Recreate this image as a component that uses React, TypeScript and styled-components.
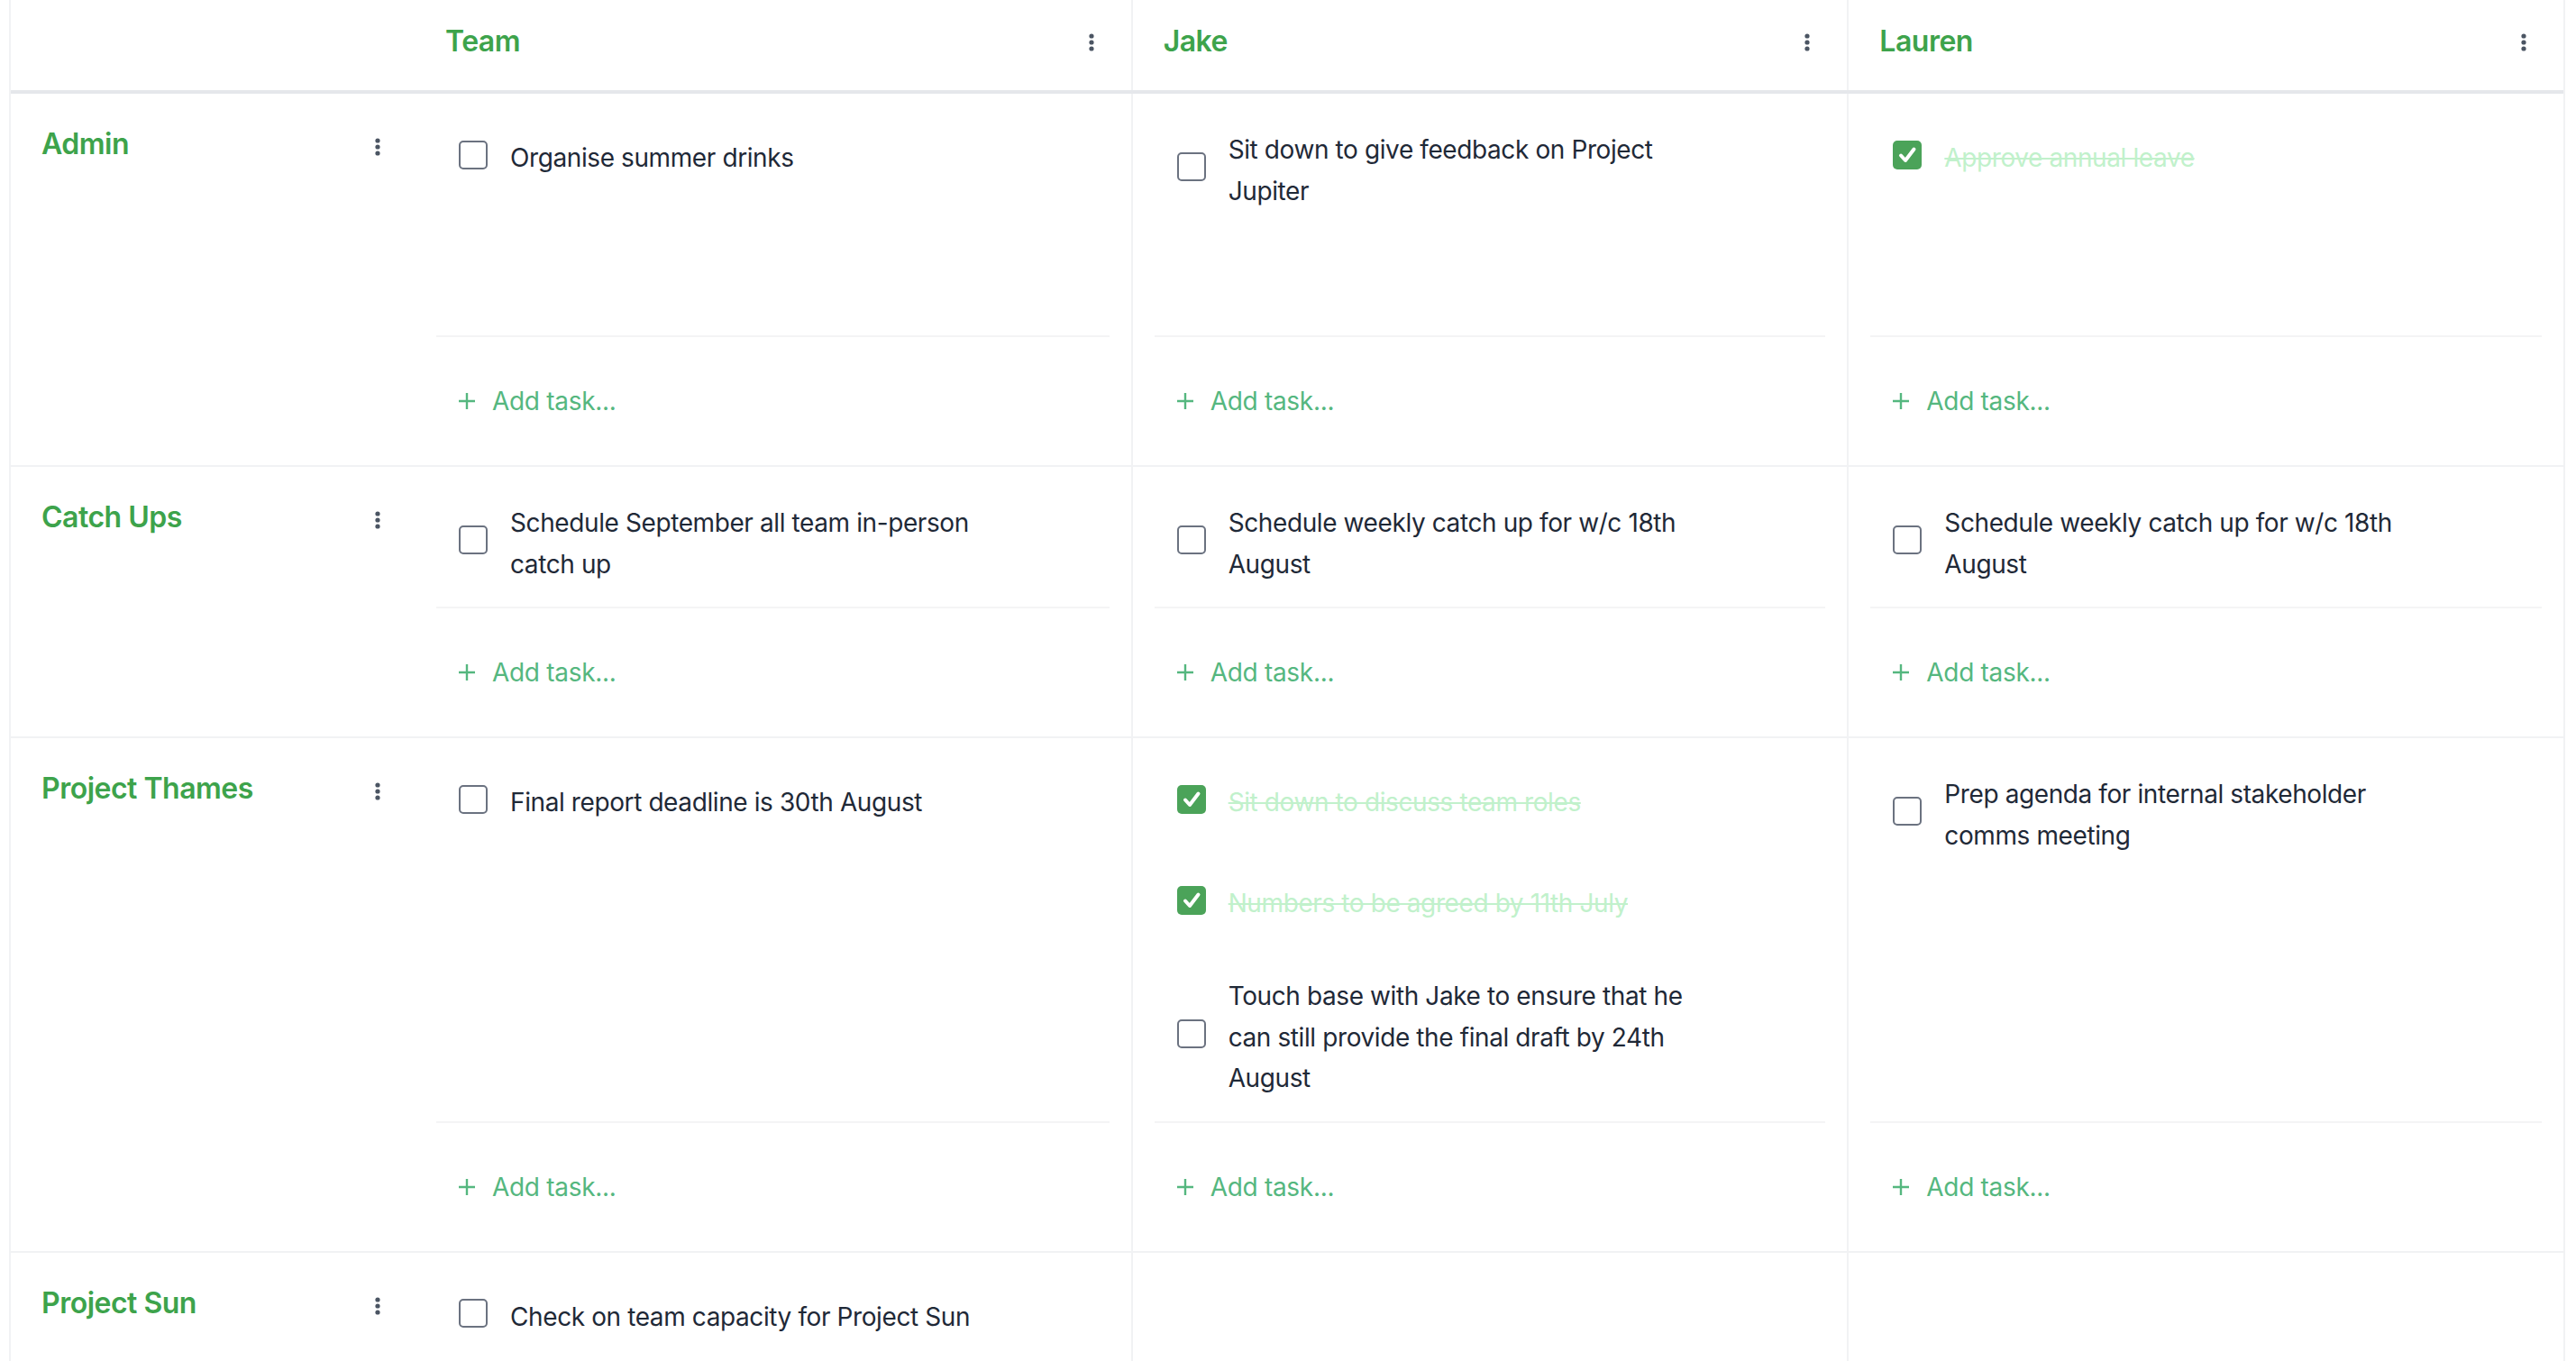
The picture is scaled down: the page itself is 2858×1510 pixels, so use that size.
import React from "react";
import styled, { createGlobalStyle } from "styled-components";

const GlobalStyle = createGlobalStyle`
  html, body { margin: 0; padding: 0; background: #ffffff; }
  body { font-family: Inter, "Noto Sans", "Liberation Sans", sans-serif; color: #1f2937; }
  * { box-sizing: border-box; }
`;

const GREEN = "#3da34b";
const ADD_GREEN = "#55b77f";
const LINE = "#f1f2f4";

type Task = { text: string; done?: boolean };
type Group = { name: string; minTaskHeight?: number; cells: Task[][] };

const columns = ["Team", "Jake", "Lauren"];

const groups: Group[] = [
  {
    name: "Admin",
    minTaskHeight: 268,
    cells: [
      [{ text: "Organise summer drinks" }],
      [{ text: "Sit down to give feedback on Project Jupiter" }],
      [{ text: "Approve annual leave", done: true }],
    ],
  },
  {
    name: "Catch Ups",
    cells: [
      [{ text: "Schedule September all team in-person catch up" }],
      [{ text: "Schedule weekly catch up for w/c 18th August" }],
      [{ text: "Schedule weekly catch up for w/c 18th August" }],
    ],
  },
  {
    name: "Project Thames",
    cells: [
      [{ text: "Final report deadline is 30th August" }],
      [
        { text: "Sit down to discuss team roles", done: true },
        { text: "Numbers to be agreed by 11th July", done: true },
        { text: "Touch base with Jake to ensure that he can still provide the final draft by 24th August" },
      ],
      [{ text: "Prep agenda for internal stakeholder comms meeting" }],
    ],
  },
  {
    name: "Project Sun",
    cells: [[{ text: "Check on team capacity for Project Sun" }], [], []],
  },
];

const Page = styled.div`
  padding: 0 12px 0 10px;
`;

const Board = styled.div`
  border-left: 2px solid ${LINE};
  border-right: 2px solid ${LINE};
`;

const GridRow = styled.div`
  display: grid;
  grid-template-columns: 448px repeat(3, 1fr);
`;

const HeaderRow = styled(GridRow)`
  height: 104px;
  border-bottom: 4px solid #e5e7eb;
`;

const HeaderCorner = styled.div``;

const HeaderCell = styled.div<{ $divided: boolean }>`
  display: flex;
  align-items: center;
  justify-content: space-between;
  padding: 0 41px 10px 34px;
  border-left: ${(p) => (p.$divided ? `2px solid ${LINE}` : "none")};
`;

const ColumnTitle = styled.span`
  font-size: 32px;
  font-weight: 600;
  color: ${GREEN};
  letter-spacing: -0.5px;
`;

const GroupRow = styled(GridRow)`
  border-bottom: 2px solid ${LINE};
`;

const GroupLabelCell = styled.div`
  display: flex;
  align-items: flex-start;
  justify-content: space-between;
  padding: 31px 38px 0 34px;
`;

const GroupName = styled.span`
  font-size: 32px;
  line-height: 50px;
  font-weight: 600;
  color: ${GREEN};
  letter-spacing: -0.5px;
`;

const KebabButton = styled.span<{ $offset: number }>`
  display: inline-flex;
  margin-top: ${(p) => p.$offset}px;
  color: #4b5563;
`;

const TaskCell = styled.div<{ $divided: boolean }>`
  display: flex;
  flex-direction: column;
  border-left: ${(p) => (p.$divided ? `2px solid ${LINE}` : "none")};
`;

const TaskList = styled.div<{ $minHeight?: number }>`
  display: flex;
  flex-direction: column;
  gap: 24px;
  flex: 1;
  padding: 28px 24px 12px;
  min-height: ${(p) => (p.$minHeight ? `${p.$minHeight}px` : "0")};
`;

const TaskItem = styled.label`
  display: flex;
  align-items: center;
  min-height: 88px;
  padding: 12px 25px;
`;

const Box = styled.span<{ $checked: boolean }>`
  flex: 0 0 auto;
  width: 32px;
  height: 32px;
  margin-bottom: 9px;
  border-radius: 5px;
  display: inline-flex;
  align-items: center;
  justify-content: center;
  border: ${(p) => (p.$checked ? "none" : "2px solid #6b7280")};
  background: ${(p) => (p.$checked ? "#4ba359" : "#ffffff")};
`;

const TaskText = styled.span<{ $done: boolean }>`
  margin-left: 25px;
  max-width: 530px;
  font-size: 28px;
  line-height: 45.5px;
  letter-spacing: -0.4px;
  color: ${(p) => (p.$done ? "#c1f1cb" : "#1f2937")};
  text-decoration: ${(p) => (p.$done ? "line-through" : "none")};
  text-decoration-thickness: 2px;
`;

const AddTaskRow = styled.div`
  display: flex;
  align-items: center;
  height: 144px;
  margin: 0 24px;
  padding-left: 24px;
  border-top: 2px solid #f4f4f5;
  color: ${ADD_GREEN};
  font-size: 28px;
  letter-spacing: -0.3px;
  gap: 18px;
`;

const Kebab = () => (
  <svg width="6" height="20" viewBox="0 0 6 20" aria-hidden="true">
    <circle cx="3" cy="3" r="2.6" fill="currentColor" />
    <circle cx="3" cy="10" r="2.6" fill="currentColor" />
    <circle cx="3" cy="17" r="2.6" fill="currentColor" />
  </svg>
);

const Plus = () => (
  <svg width="20" height="20" viewBox="0 0 20 20" aria-hidden="true">
    <path d="M10 1v18M1 10h18" stroke="currentColor" strokeWidth="2.4" fill="none" />
  </svg>
);

const Check = () => (
  <svg width="32" height="32" viewBox="0 0 32 32" aria-hidden="true">
    <path
      d="M9 16.5l5 5.5L23.5 9.5"
      stroke="#ffffff"
      strokeWidth="4"
      strokeLinecap="round"
      strokeLinejoin="round"
      fill="none"
    />
  </svg>
);

const TaskRow = ({ task }: { task: Task }) => (
  <TaskItem>
    <Box $checked={!!task.done}>{task.done && <Check />}</Box>
    <TaskText $done={!!task.done}>{task.text}</TaskText>
  </TaskItem>
);

export default function App() {
  return (
    <Page>
      <GlobalStyle />
      <Board>
        <HeaderRow>
          <HeaderCorner />
          {columns.map((c, i) => (
            <HeaderCell key={c} $divided={i > 0}>
              <ColumnTitle>{c}</ColumnTitle>
              <KebabButton $offset={4}>
                <Kebab />
              </KebabButton>
            </HeaderCell>
          ))}
        </HeaderRow>
        {groups.map((g) => (
          <GroupRow key={g.name}>
            <GroupLabelCell>
              <GroupName>{g.name}</GroupName>
              <KebabButton $offset={18}>
                <Kebab />
              </KebabButton>
            </GroupLabelCell>
            {g.cells.map((tasks, i) => (
              <TaskCell key={i} $divided={i > 0}>
                <TaskList $minHeight={g.minTaskHeight}>
                  {tasks.map((t, j) => (
                    <TaskRow key={j} task={t} />
                  ))}
                </TaskList>
                <AddTaskRow>
                  <Plus />
                  <span>Add task...</span>
                </AddTaskRow>
              </TaskCell>
            ))}
          </GroupRow>
        ))}
      </Board>
    </Page>
  );
}
